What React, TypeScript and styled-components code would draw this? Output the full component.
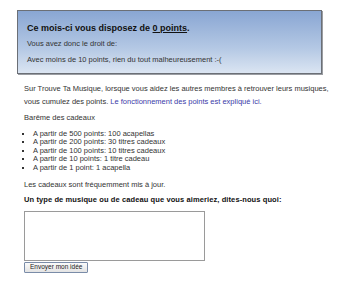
import React from 'react';
import styled, { createGlobalStyle } from 'styled-components';

const GlobalStyle = createGlobalStyle`
    body {
        margin: 0;
        background: #ffffff;
        font-family: 'Liberation Sans', Arial, sans-serif;
        color: #333333;
    }
`;

const Page = styled.div`
    width: 340px;
    height: 283px;
    padding: 10px 0 0 17px;
    box-sizing: border-box;
    overflow: hidden;
`;

const PointsBox = styled.div`
    width: 305px;
    height: 64px;
    box-sizing: border-box;
    padding: 11px 9px 0 9px;
    border: 1px solid #6b6f76;
    background: linear-gradient(to bottom, #89a6d3 0%, #b4c8e4 60%, #dbe5f2 100%);
    box-shadow: 1px 1px 0 #9a9da2;
`;

const BoxTitle = styled.div`
    font-size: 9px;
    font-weight: bold;
    color: #111111;
    line-height: 12px;
    margin-bottom: 5px;
`;

const Points = styled.span`
    text-decoration: underline;
`;

const BoxLine = styled.div`
    font-size: 7.5px;
    line-height: 9px;
    color: #333333;
    margin-bottom: 7px;
`;

const Content = styled.div`
    padding: 9px 0 0 7px;
    width: 306px;
`;

const Paragraph = styled.p<{ $gap?: number }>`
    margin: 0 0 ${({ $gap }) => $gap ?? 7}px 0;
    font-size: 7.5px;
    line-height: 12.5px;
`;

const Link = styled.a`
    color: #3a3aa8;
    text-decoration: none;
`;

const GiftList = styled.ul`
    margin: 0 0 7px 0;
    padding: 0 0 0 9px;
    list-style: square;
    font-size: 7.5px;
    line-height: 8.5px;
`;

const Question = styled.div`
    margin-top: 2px;
    font-size: 7.5px;
    font-weight: bold;
    color: #111111;
    letter-spacing: 0.1px;
    line-height: 10px;
    margin-bottom: 6px;
`;

const IdeaArea = styled.textarea`
    display: block;
    width: 181px;
    height: 50px;
    box-sizing: border-box;
    border: 1px solid #9a9a9a;
    margin: 0;
    resize: none;
`;

const SendButton = styled.button`
    display: block;
    margin-top: 1px;
    height: 11px;
    padding: 0 5px;
    font-family: 'Liberation Sans', Arial, sans-serif;
    font-size: 6.5px;
    line-height: 8px;
    color: #222222;
    background: linear-gradient(to bottom, #fbfbfb, #e3e3e3);
    border: 1px solid #7a8ca8;
    border-radius: 1px;
`;

const gifts = [
    'A partir de 500 points: 100 acapellas',
    'A partir de 200 points: 30 titres cadeaux',
    'A partir de 100 points: 10 titres cadeaux',
    'A partir de 10 points: 1 titre cadeau',
    'A partir de 1 point: 1 acapella',
];

const App: React.FC = () => {
    return (
        <Page>
            <GlobalStyle />
            <PointsBox>
                <BoxTitle>
                    Ce mois-ci vous disposez de <Points>0 points</Points>.
                </BoxTitle>
                <BoxLine>Vous avez donc le droit de:</BoxLine>
                <BoxLine>Avec moins de 10 points, rien du tout malheureusement :-(</BoxLine>
            </PointsBox>
            <Content>
                <Paragraph $gap={4}>
                    Sur Trouve Ta Musique, lorsque vous aidez les autres membres à retrouver leurs musiques,
                    vous cumulez des points. <Link href="#">Le fonctionnement des points est expliqué ici.</Link>
                </Paragraph>
                <Paragraph $gap={5}>Barême des cadeaux</Paragraph>
                <GiftList>
                    {gifts.map((gift) => (
                        <li key={gift}>{gift}</li>
                    ))}
                </GiftList>
                <Paragraph $gap={3}>Les cadeaux sont fréquemment mis à jour.</Paragraph>
                <Question>Un type de musique ou de cadeau que vous aimeriez, dites-nous quoi:</Question>
                <IdeaArea />
                <SendButton type="button">Envoyer mon idée</SendButton>
            </Content>
        </Page>
    );
};

export default App;
